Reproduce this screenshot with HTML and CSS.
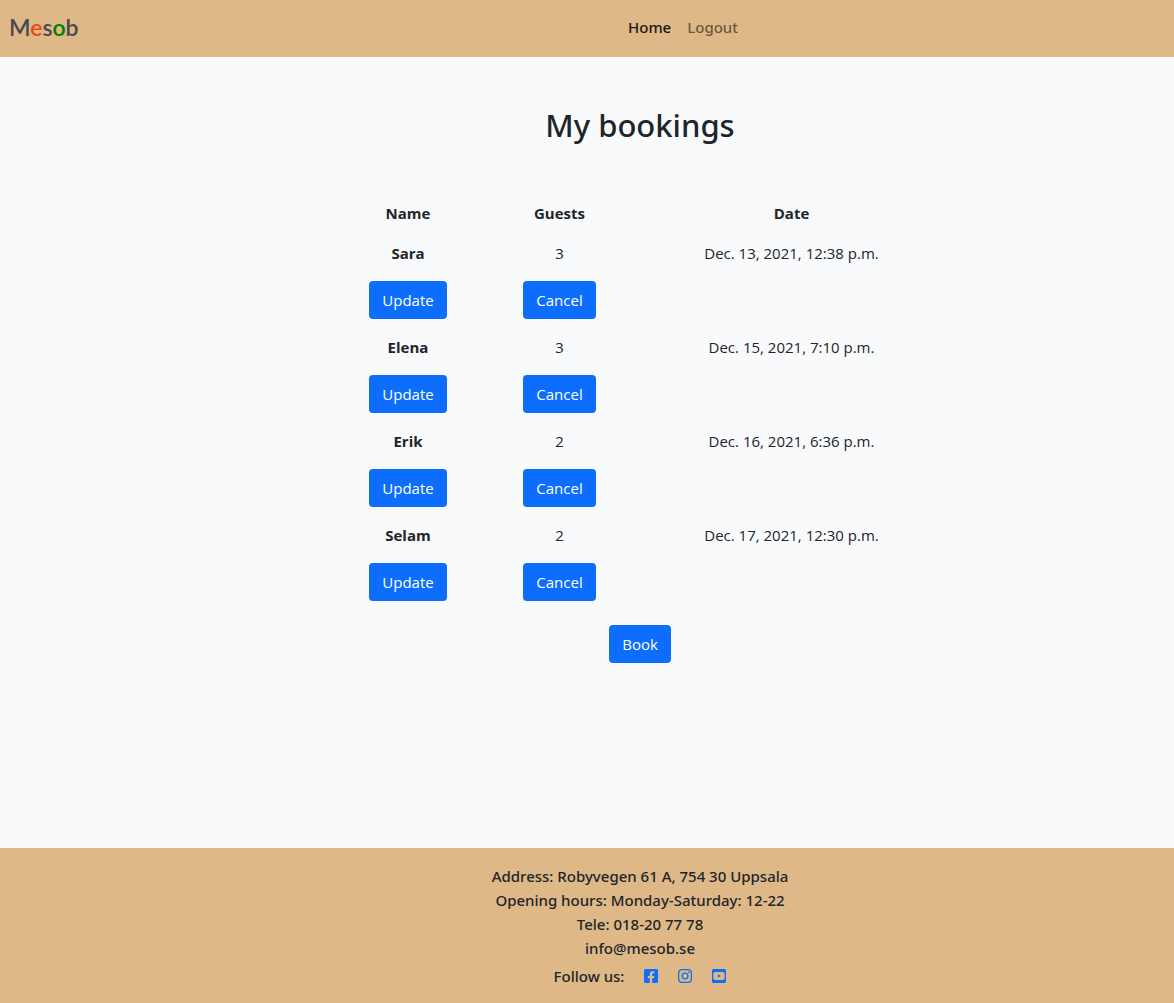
FILE: index.html
```html
<!DOCTYPE html>
<html lang="en">
<head>
  <meta charset="utf-8">
  <meta name="viewport" content="width=device-width, initial-scale=1">
  <title>Mesob - My bookings</title>
  <link rel="stylesheet" href="styles.css">
</head>
<body>
  <header class="navbar">
    <a class="brand" href="#">M<span class="brand-red">e</span>s<span class="brand-green">o</span>b</a>
    <nav class="nav-links">
      <a class="nav-link active" href="#">Home</a>
      <a class="nav-link" href="#">Logout</a>
    </nav>
  </header>

  <main class="content">
    <h1 class="title">My bookings</h1>
    <table class="bookings">
      <colgroup><col class="col-name"><col class="col-guests"><col></colgroup>
      <thead>
        <tr><th scope="col">Name</th><th scope="col">Guests</th><th scope="col">Date</th></tr>
      </thead>
      <tbody>
        <tr><th scope="row">Sara</th><td>3</td><td>Dec. 13, 2021, 12:38 p.m.</td></tr>
        <tr><td><button class="btn btn-update" type="button">Update</button></td><td><button class="btn btn-cancel" type="button">Cancel</button></td><td></td></tr>
        <tr><th scope="row">Elena</th><td>3</td><td>Dec. 15, 2021, 7:10 p.m.</td></tr>
        <tr><td><button class="btn btn-update" type="button">Update</button></td><td><button class="btn btn-cancel" type="button">Cancel</button></td><td></td></tr>
        <tr><th scope="row">Erik</th><td>2</td><td>Dec. 16, 2021, 6:36 p.m.</td></tr>
        <tr><td><button class="btn btn-update" type="button">Update</button></td><td><button class="btn btn-cancel" type="button">Cancel</button></td><td></td></tr>
        <tr><th scope="row">Selam</th><td>2</td><td>Dec. 17, 2021, 12:30 p.m.</td></tr>
        <tr><td><button class="btn btn-update" type="button">Update</button></td><td><button class="btn btn-cancel" type="button">Cancel</button></td><td></td></tr>
      </tbody>
    </table>
    <button class="btn btn-book" type="button">Book</button>
  </main>

  <footer class="footer">
    <p>Address: Robyvegen 61 A, 754 30 Uppsala</p>
    <p>Opening hours: Monday-Saturday: 12-22</p>
    <p>Tele: 018-20 77 78</p>
    <p>info@mesob.se</p>
    <div class="follow">
      <span>Follow us:</span>
      <a class="social" href="#" aria-label="Facebook">
        <svg viewBox="0 0 448 512"><path d="M400 32H48A48 48 0 0 0 0 80v352a48 48 0 0 0 48 48h137.250V327.690h-63V256h63v-54.640c0-62.150 37-96.480 93.670-96.480 27.140 0 55.520 4.840 55.520 4.840v61h-31.270c-30.810 0-40.420 19.120-40.420 38.730V256h68.780l-11 71.690h-57.780V480H400a48 48 0 0 0 48-48V80a48 48 0 0 0-48-48z"/></svg>
      </a>
      <a class="social" href="#" aria-label="Instagram">
        <svg viewBox="0 0 448 512"><g fill="none" stroke="currentColor" stroke-width="42"><rect x="21" y="53" width="406" height="406" rx="108"/><circle cx="224" cy="256" r="94"/></g><circle cx="344" cy="136" r="27"/></svg>
      </a>
      <a class="social" href="#" aria-label="YouTube">
        <svg viewBox="0 0 448 512"><path fill-rule="evenodd" d="M186.800 202.100l95.200 54.100-95.200 54.100V202.100zM448 80v352c0 26.500-21.500 48-48 48H48c-26.500 0-48-21.500-48-48V80c0-26.500 21.500-48 48-48h352c26.500 0 48 21.500 48 48zm-42 176.300s0-59.600-7.600-88.200c-4.200-15.800-16.500-28.200-32.200-32.400C337.900 128 224 128 224 128s-113.900 0-142.200 7.700c-15.700 4.200-28 16.600-32.200 32.400-7.600 28.500-7.600 88.200-7.600 88.200s0 59.600 7.600 88.200c4.200 15.800 16.500 27.700 32.200 31.900C110.100 384 224 384 224 384s113.900 0 142.200-7.700c15.700-4.200 28-16.100 32.200-31.900 7.600-28.500 7.600-88.100 7.600-88.100z"/></svg>
      </a>
    </div>
  </footer>
</body>
</html>
```
FILE: styles.css
```css
* {
  box-sizing: border-box;
}

body {
  display: flex;
  flex-direction: column;
  min-height: 100vh;
  margin: 0;
  background: #f9fafc;
  color: #212529;
  font-family: "Open Sans", "Noto Sans", sans-serif;
  font-size: 15px;
  line-height: 24px;
}

.navbar {
  display: grid;
  grid-template-columns: 1fr auto 1fr;
  align-items: center;
  min-height: 57px;
  padding: 6px 9px 10px;
  background: burlywood;
}

.brand {
  color: #4a4a4f;
  font-family: Lato, sans-serif;
  font-size: 23px;
  font-weight: 600;
  line-height: 36px;
  text-decoration: none;
}

.brand-red {
  color: #f04a14;
}

.brand-green {
  color: green;
}

.nav-links {
  display: flex;
  gap: 16px;
  padding-left: 192px;
}

.nav-link {
  color: rgba(0, 0, 0, 0.55);
  text-decoration: none;
}

.nav-link.active {
  color: rgba(0, 0, 0, 0.9);
}

.nav-link,
.title,
.footer {
  font-family: "Noto Sans", "Open Sans", sans-serif;
  font-weight: 500;
}

.content {
  display: flex;
  flex: 1;
  flex-direction: column;
  align-items: center;
  padding: 48px 0 48px 106px;
}

.title {
  margin: 0 0 48px;
  font-size: 31px;
  line-height: 40px;
}

.bookings {
  width: 60%;
  max-width: 640px;
  border-collapse: collapse;
  table-layout: fixed;
  text-align: center;
}

.col-name {
  width: 176px;
}

.col-guests {
  width: 127px;
}

.bookings th,
.bookings td {
  padding: 8px;
}

.bookings th {
  font-weight: 700;
}

.btn {
  display: inline-block;
  height: 38px;
  padding: 0;
  border: 0;
  border-radius: 4px;
  background: #0d6efd;
  color: #fff;
  font: inherit;
  vertical-align: middle;
  cursor: pointer;
}

.btn-update {
  width: 78px;
}

.btn-cancel {
  width: 73px;
}

.btn-book {
  width: 62px;
  margin-top: 16px;
}

.footer {
  padding: 16px 0 15px 106px;
  background: burlywood;
  text-align: center;
}

.footer p {
  margin: 0;
}

.follow {
  display: flex;
  align-items: center;
  justify-content: center;
  gap: 20px;
  padding-top: 4px;
}

.social {
  display: flex;
  color: #0d6efd;
}

.social svg {
  width: 14px;
  height: 16px;
  fill: currentColor;
}
```
